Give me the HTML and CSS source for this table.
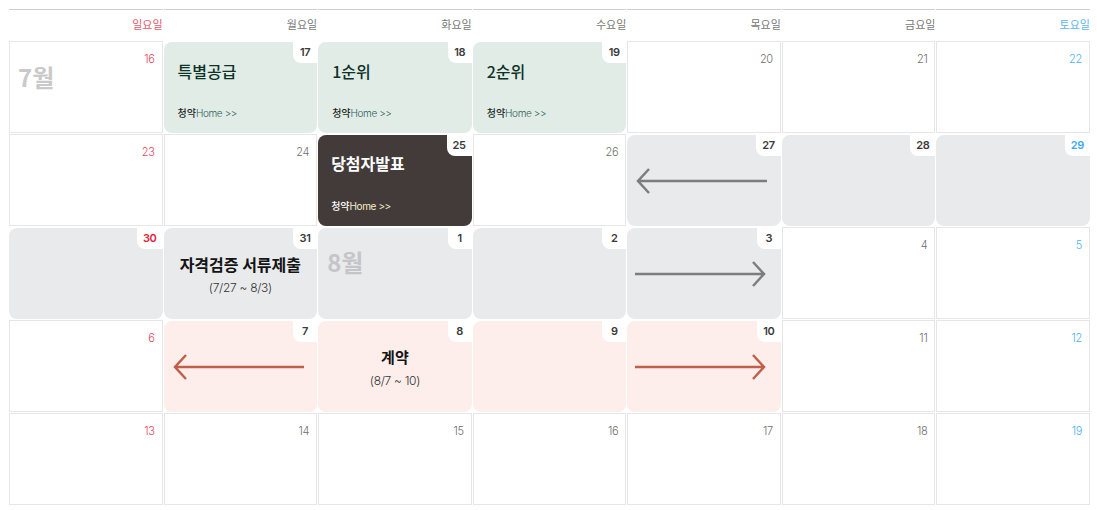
FILE: index.html
```html
<!DOCTYPE html>
<html>
  <head>
    <title>청약 일정</title>
    <link rel="stylesheet" href="styles.css">
  </head>
  <body>
    <div class="calendar">
      <div class="week-head">
        <div class="wd sun">일요일</div>
        <div class="wd">월요일</div>
        <div class="wd">화요일</div>
        <div class="wd">수요일</div>
        <div class="wd">목요일</div>
        <div class="wd">금요일</div>
        <div class="wd sat">토요일</div>
      </div>

      <div class="month-grid">
        <!-- week 1 -->
        <div class="day sun"><span class="num">16</span><div class="month">7월</div></div>
        <div class="day ev green">
          <span class="num">17</span>
          <div class="ev-title">특별공급</div>
          <div class="ev-link"><b>청약</b>Home &gt;&gt;</div>
        </div>
        <div class="day ev green">
          <span class="num">18</span>
          <div class="ev-title">1순위</div>
          <div class="ev-link"><b>청약</b>Home &gt;&gt;</div>
        </div>
        <div class="day ev green">
          <span class="num">19</span>
          <div class="ev-title">2순위</div>
          <div class="ev-link"><b>청약</b>Home &gt;&gt;</div>
        </div>
        <div class="day"><span class="num">20</span></div>
        <div class="day"><span class="num">21</span></div>
        <div class="day sat"><span class="num">22</span></div>

        <!-- week 2 -->
        <div class="day sun"><span class="num">23</span></div>
        <div class="day"><span class="num">24</span></div>
        <div class="day ev dark">
          <span class="num">25</span>
          <div class="ev-title">당첨자발표</div>
          <div class="ev-link"><b>청약</b>Home &gt;&gt;</div>
        </div>
        <div class="day"><span class="num">26</span></div>
        <div class="day ev gray arrow-cell">
          <span class="num">27</span>
          <svg class="arrow" width="134" height="28" viewBox="0 0 134 28"><path d="M132 14H3M14 2L3 14l11 12" fill="none" stroke="#7d7d7d" stroke-width="2.5"/></svg>
        </div>
        <div class="day ev gray"><span class="num">28</span></div>
        <div class="day ev gray sat"><span class="num">29</span></div>

        <!-- week 3 -->
        <div class="day ev gray sun"><span class="num">30</span></div>
        <div class="day ev gray center">
          <span class="num">31</span>
          <div class="ev-name">자격검증 서류제출</div>
          <div class="ev-range">(7/27 ~ 8/3)</div>
        </div>
        <div class="day ev gray">
          <span class="num">1</span>
          <div class="month in-ev">8월</div>
        </div>
        <div class="day ev gray"><span class="num">2</span></div>
        <div class="day ev gray arrow-cell">
          <span class="num">3</span>
          <svg class="arrow" width="134" height="28" viewBox="0 0 134 28"><path d="M0 14h129M118 2l11 12-11 12" fill="none" stroke="#7d7d7d" stroke-width="2.5"/></svg>
        </div>
        <div class="day"><span class="num">4</span></div>
        <div class="day sat"><span class="num">5</span></div>

        <!-- week 4 -->
        <div class="day sun"><span class="num">6</span></div>
        <div class="day ev pink arrow-cell">
          <span class="num">7</span>
          <svg class="arrow" width="134" height="28" viewBox="0 0 134 28"><path d="M132 14H3M14 2L3 14l11 12" fill="none" stroke="#c0604b" stroke-width="2.5"/></svg>
        </div>
        <div class="day ev pink center">
          <span class="num">8</span>
          <div class="ev-name small">계약</div>
          <div class="ev-range">(8/7 ~ 10)</div>
        </div>
        <div class="day ev pink"><span class="num">9</span></div>
        <div class="day ev pink arrow-cell">
          <span class="num">10</span>
          <svg class="arrow" width="134" height="28" viewBox="0 0 134 28"><path d="M0 14h129M118 2l11 12-11 12" fill="none" stroke="#c0604b" stroke-width="2.5"/></svg>
        </div>
        <div class="day"><span class="num">11</span></div>
        <div class="day sat"><span class="num">12</span></div>

        <!-- week 5 -->
        <div class="day sun"><span class="num">13</span></div>
        <div class="day"><span class="num">14</span></div>
        <div class="day"><span class="num">15</span></div>
        <div class="day"><span class="num">16</span></div>
        <div class="day"><span class="num">17</span></div>
        <div class="day"><span class="num">18</span></div>
        <div class="day sat"><span class="num">19</span></div>
      </div>
    </div>
  </body>
</html>
```

FILE: styles.css
```css
body {
  margin: 0;
  padding: 9px 7px 0 9px;
  font-family: "Noto Sans CJK KR", "Noto Sans", sans-serif;
  background: #fff;
  color: #333;
}

.calendar {
  width: 1081px;
}

.week-head {
  display: grid;
  grid-template-columns: repeat(7, 1fr);
  column-gap: 1px;
}

.wd {
  border-top: 1px solid #cfcfcf;
  padding-top: 8px;
  box-sizing: border-box;
  height: 32px;
  text-align: right;
  font-size: 11px;
  line-height: 13px;
  color: #777;
}

.wd.sun {
  color: #e2596c;
}

.wd.sat {
  color: #5bb5ee;
}

.month-grid {
  display: grid;
  grid-template-columns: repeat(7, 1fr);
  grid-auto-rows: 92px;
  gap: 1px;
}

.day {
  position: relative;
  border: 1px solid #e6e6e6;
  box-sizing: border-box;
}

.num {
  display: block;
  text-align: right;
  padding: 11px 7px 0 0;
  font-family: Inter, "Noto Sans", sans-serif;
  font-size: 11px;
  font-weight: 300;
  line-height: 13px;
  letter-spacing: -0.3px;
  color: #6f6f6f;
}

.sun .num {
  color: #e2485e;
}

.sat .num {
  color: #4fb1ef;
}

.month {
  padding-left: 8px;
  margin-top: -3px;
  font-size: 24px;
  font-weight: 700;
  line-height: 28px;
  color: #c9c9cb;
}

.month.in-ev {
  padding: 20px 0 0 9px;
  margin: 0;
  color: #c4c5c8;
}

/* event cells */
.ev {
  border: none;
  border-radius: 8px;
  margin-top: 1px;
}

.ev .num {
  position: absolute;
  top: 0;
  right: 0;
  padding: 4px 6px;
  min-width: 12px;
  text-align: center;
  background: #fff;
  border-bottom-left-radius: 8px;
  font-weight: 600;
  color: #3a3a3a;
}

.ev.sun .num {
  color: #e2233a;
}

.ev.sat .num {
  color: #3fa9ef;
}

.green {
  background: #e2ece6;
  display: flex;
  flex-direction: column;
  justify-content: space-between;
  padding: 18px 14px 14px;
}

.dark {
  background: #433b3a;
  display: flex;
  flex-direction: column;
  justify-content: space-between;
  padding: 17px 13px 14px;
}

.gray {
  background: #e9eaec;
}

.pink {
  background: #fdeeeb;
}

.ev-title {
  font-size: 16px;
  font-weight: 500;
  line-height: 22px;
  color: #0d3226;
}

.dark .ev-title {
  font-size: 16px;
  font-weight: 700;
  color: #fff;
}

.ev-link {
  font-family: Inter, "Noto Sans", sans-serif;
  font-size: 10px;
  font-weight: 300;
  line-height: 12px;
  letter-spacing: -0.4px;
  color: #2f5f5a;
}

.ev-link b {
  font-family: "Noto Sans CJK KR", sans-serif;
  font-weight: 500;
  color: #1d2a26;
  letter-spacing: 0;
}

.dark .ev-link b {
  color: #fff;
}

.dark .ev-link {
  color: #f7ecc8;
  font-weight: 400;
}

.center {
  display: flex;
  flex-direction: column;
  justify-content: center;
  align-items: center;
  padding-top: 2px;
}

.ev-name {
  font-size: 16px;
  font-weight: 700;
  line-height: 20px;
  color: #141414;
}

.ev-name.small {
  font-size: 15px;
}

.ev-range {
  margin-top: 6px;
  font-family: Inter, "Noto Sans", sans-serif;
  font-size: 12px;
  font-weight: 300;
  line-height: 16px;
  letter-spacing: -0.3px;
  color: #333;
}

.arrow-cell {
  display: flex;
  align-items: center;
  padding-left: 8px;
}

.arrow {
  display: block;
}
```
